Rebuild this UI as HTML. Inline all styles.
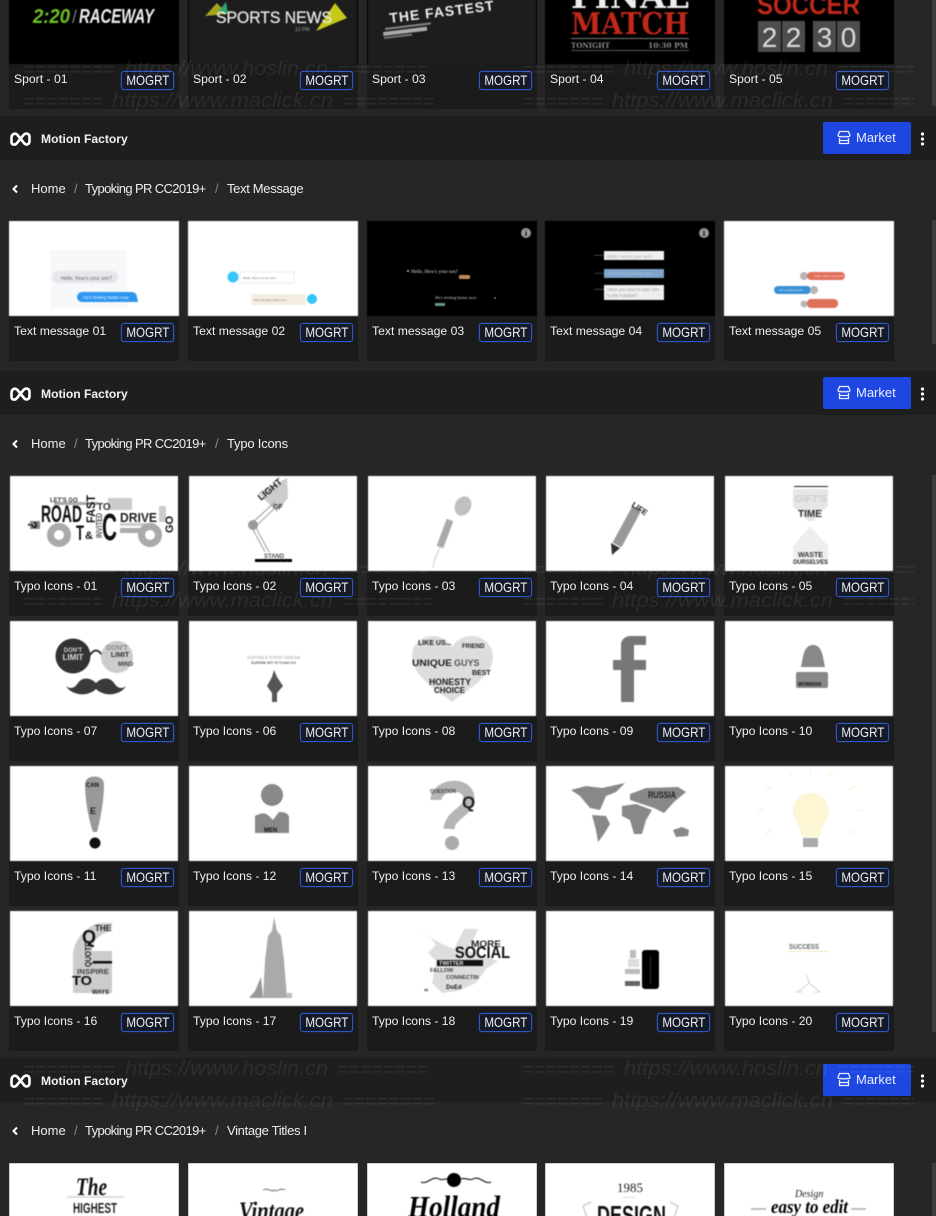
<!DOCTYPE html>
<html><head><meta charset="utf-8"><title>Motion Factory</title>
<style>
html,body{margin:0;padding:0;background:#262626;width:936px;height:1216px;overflow:hidden}
body{font-family:"Liberation Sans",sans-serif;color:#eee}
#p{position:relative;width:936px;height:1216px;overflow:hidden}
.c{position:absolute;width:170px;height:140px;background:#1b1b1b}
.v{height:53px;overflow:hidden}
.x1{left:9px}.x2{left:188px}.x3{left:367px}.x4{left:545px}.x5{left:724px}
.i{position:absolute;left:0;top:0;width:170px;height:95px;background:#fff;display:block;overflow:hidden;filter:blur(.4px)}
.y .i{left:1px;width:168px}
.k{background:#000}.g{background:#1d1d1d;box-shadow:inset 1px 0 #000,inset -1px 0 #000}
.t{position:absolute;left:5px;top:103px;font-size:12.2px;line-height:14px;color:#f0f0f0;white-space:nowrap}
.m{position:absolute;left:112px;top:102px;width:51px;height:17px;border:1px solid #2f57c4;border-radius:3px;background:#151a28;font-size:14px;line-height:16px;text-align:center;color:#eee;box-shadow:0 0 1px #2f57c4}
.m span{display:block;transform:scaleX(.83)}
.h{position:absolute;left:0;width:936px;height:44px;background:#1e1e1e}
.logo{position:absolute;left:9px;top:15px}
.n{position:absolute;left:41px;top:16px;font-size:12.1px;line-height:15px;font-weight:bold;color:#f2f2f2}
.b{position:absolute;left:823px;top:6px;width:88px;height:32px;background:#1d47e0;border-radius:2px;color:#e9eeff;font-size:13px;line-height:31px}
.b span{position:absolute;left:33px}
.b svg{position:absolute;left:14px;top:8px}
.d{position:absolute;left:920px;top:16px}
.r{position:absolute;left:0;width:600px;height:20px;font-size:13px;line-height:20px;color:#eee}
.r span{position:absolute;white-space:nowrap}
.r i{position:absolute;font-style:normal;color:#8a8a8a}
.r svg{position:absolute;left:11px;top:5px}
.tp{letter-spacing:-.63px}
.sb{position:absolute;left:932px;width:4px;background:#3c3c3c}
svg text{font-family:"Liberation Sans",sans-serif}
.bd{font-weight:bold}
svg .sf{font-family:"Liberation Serif",serif}
svg .dj{font-family:"DejaVu Serif",serif}
.wm{position:absolute;left:0;top:0;pointer-events:none}
</style></head><body><div id="p">

<div class="sb" style="top:0;height:106px"></div>
<div class="sb" style="top:220px;height:124px"></div>
<div class="sb" style="top:475px;height:557px"></div>
<div class="sb" style="top:1163px;height:53px"></div>

<!-- Sport row -->
<div class="c x1" style="top:-31px"><svg class="i k" viewBox="0 0 170 95"><text x="24" y="54" class="bd" font-style="italic" font-size="20" fill="#6fc21f" textLength="37" lengthAdjust="spacingAndGlyphs">2:20</text><text x="63" y="54" font-size="18" fill="#777">/</text><text x="70" y="54" class="bd" font-style="italic" font-size="20" fill="#eee" textLength="75" lengthAdjust="spacingAndGlyphs">RACEWAY</text></svg><div class="t">Sport - 01</div><div class="m"><span>MOGRT</span></div></div>

<div class="c x2" style="top:-31px"><svg class="i g" viewBox="0 0 170 95"><polygon points="17,47 29,34 39,45" fill="#a5a51c"/><polygon points="30,43 38,33 40,45" fill="#2aa86a"/><polygon points="128,62 147,34 159,49" fill="#c8c81a"/><text x="28" y="54" font-size="17" fill="#e8e8e8" stroke="#e8e8e8" stroke-width=".3" textLength="116" lengthAdjust="spacingAndGlyphs">SPORTS NEWS</text><text x="107" y="62" font-size="5" class="bd" fill="#777">12 PM</text></svg><div class="t">Sport - 02</div><div class="m"><span>MOGRT</span></div></div>

<div class="c x3" style="top:-31px"><svg class="i g" viewBox="0 0 170 95"><text x="23" y="54" class="bd" font-size="14" fill="#eee" letter-spacing="1" transform="rotate(-7 23 54)">THE FASTEST</text><rect x="18" y="59" width="46" height="2" fill="#888" transform="rotate(-7 18 59)"/><rect x="16" y="63" width="44" height="4" fill="#aaa" transform="rotate(-7 16 63)"/><rect x="17" y="68" width="28" height="2" fill="#777" transform="rotate(-7 17 68)"/></svg><div class="t">Sport - 03</div><div class="m"><span>MOGRT</span></div></div>

<div class="c x4" style="top:-31px"><svg class="i k" viewBox="0 0 170 95"><text x="26" y="39" class="bd dj" font-size="34" fill="#eee" textLength="118" lengthAdjust="spacingAndGlyphs">FINAL</text><text x="26" y="65" class="bd dj" font-size="30" fill="#c0281a" textLength="118" lengthAdjust="spacingAndGlyphs">MATCH</text><rect x="26" y="69" width="118" height="1" fill="#777"/><text x="26" y="79" class="bd dj" font-size="7" fill="#888" textLength="39" lengthAdjust="spacingAndGlyphs">TONIGHT</text><text x="103" y="79" class="bd dj" font-size="7" fill="#888" textLength="40" lengthAdjust="spacingAndGlyphs">10:30 PM</text><rect x="26" y="81" width="118" height="1" fill="#555"/></svg><div class="t">Sport - 04</div><div class="m"><span>MOGRT</span></div></div>

<div class="c x5" style="top:-31px"><svg class="i k" viewBox="0 0 170 95"><text x="33" y="45" class="bd" font-size="27" fill="#c0281a" textLength="103" lengthAdjust="spacingAndGlyphs">SOCCER</text><rect x="34" y="52" width="23" height="31" fill="#4d4d4d"/><rect x="58" y="52" width="23" height="31" fill="#4d4d4d"/><rect x="89" y="52" width="23" height="31" fill="#4d4d4d"/><rect x="113" y="52" width="23" height="31" fill="#4d4d4d"/><g font-size="28" fill="#ddd" text-anchor="middle"><text x="45.500" y="78">2</text><text x="69.500" y="78">2</text><text x="100.500" y="78">3</text><text x="124.500" y="78">0</text></g></svg><div class="t">Sport - 05</div><div class="m"><span>MOGRT</span></div></div>

<!-- Header 1 -->
<div class="h" style="top:116px">
<svg class="logo" width="24" height="16" viewBox="0 0 24 16"><path d="M2.500 11V7C2.500 3 6 1.500 8.500 4L15 12C17 14.500 20.500 13.500 20.500 10V6C20.500 2.500 17 1.500 14.500 4L8 12C6 14.500 2.500 14 2.500 11Z" fill="none" stroke="#fff" stroke-width="2.600" stroke-linejoin="round"/></svg>
<div class="n">Motion Factory</div>
<div class="b"><svg width="14" height="15" viewBox="0 0 14 15"><path d="M2.500 1.500h9l1.500 4a2 2 0 0 1-3 .8 2 2 0 0 1-3 0 2 2 0 0 1-3 0 2 2 0 0 1-3-.8zM2.500 8v5.500h9V8M3 10.500h8" fill="none" stroke="#e9eeff" stroke-width="1.300"/></svg><span>Market</span></div>
<svg class="d" width="5" height="14" viewBox="0 0 5 14" fill="#fff"><circle cx="2.500" cy="2" r="1.600"/><circle cx="2.500" cy="7" r="1.600"/><circle cx="2.500" cy="12" r="1.600"/></svg>
</div>
<div class="r" style="top:179px"><svg width="8" height="10" viewBox="0 0 8 10"><path d="M6 1.500L2.500 5 6 8.500" fill="none" stroke="#fff" stroke-width="2"/></svg><span style="left:31px">Home</span><i style="left:74px">/</i><span class="tp" style="left:85px">Typoking PR CC2019+</span><i style="left:215px">/</i><span style="left:227px;letter-spacing:-.33px">Text Message</span></div>

<!-- Text message row -->
<div class="c x1" style="top:221px"><svg class="i" viewBox="0 0 170 95"><rect x="41" y="29" width="77" height="58" fill="#f7f8fa"/><rect x="43" y="50" width="66" height="12" rx="6" fill="#e6e7ec"/><text x="52" y="59" font-size="5" fill="#666">Hello, How's your son?</text><path d="M68 76a5 5 0 0 1 5-5h50a5 5 0 0 1 5 5l1 5h-56a5 5 0 0 1-5-5z" fill="#2f97f0"/><text x="74" y="78" font-size="4.500" fill="#e8f4ff">He's feeling better now</text></svg><div class="t">Text message 01</div><div class="m"><span>MOGRT</span></div></div>

<div class="c x2" style="top:221px"><svg class="i" viewBox="0 0 170 95"><rect x="52" y="51" width="54" height="11" fill="#fff" stroke="#e4e4e4" stroke-width=".8"/><circle cx="45" cy="56" r="5.500" fill="#36c5f8"/><text x="55" y="58" font-size="3.500" class="sf" fill="#666">Hello, How's your son?</text><rect x="63" y="73" width="55" height="11" fill="#f3eee0"/><circle cx="124" cy="78" r="5" fill="#36c5f8"/><text x="66" y="80" font-size="3.500" class="sf" fill="#777">He's feeling better now</text></svg><div class="t">Text message 02</div><div class="m"><span>MOGRT</span></div></div>

<div class="c x3" style="top:221px"><svg class="i k" viewBox="0 0 170 95"><circle cx="41" cy="50" r="1" fill="#ccc"/><text x="44" y="52" font-size="5" class="sf" fill="#ddd">Hello, How's your son?</text><rect x="92" y="54" width="11" height="4" rx="1" fill="#c08a5a"/><text x="68" y="78" font-size="4.500" class="sf" fill="#ccc">He's feeling better now</text><rect x="68" y="82" width="10" height="3" fill="#6a9a80"/><circle cx="128" cy="77" r=".8" fill="#ccc"/><circle cx="159" cy="12" r="5" fill="#999"/><text x="159" y="15" font-size="8" class="bd sf" fill="#000" text-anchor="middle">i</text></svg><div class="t">Text message 03</div><div class="m"><span>MOGRT</span></div></div>

<div class="c x4" style="top:221px"><svg class="i k" viewBox="0 0 170 95"><rect x="49" y="34" width="10" height=".6" fill="#666"/><rect x="59" y="30" width="60" height="9" fill="#eee"/><text x="62" y="37" font-size="4.500" fill="#aaa">Hello, How's your son?</text><rect x="50" y="52" width="9" height=".6" fill="#666"/><rect x="59" y="48" width="60" height="9" fill="#7fa4c9"/><text x="62" y="54" font-size="4.500" fill="#a8c2dc">He's feeling better now</text><rect x="49" y="68" width="10" height=".6" fill="#666"/><rect x="59" y="64" width="60" height="15" fill="#eee"/><text x="62" y="70" font-size="4.500" fill="#999">Have you tried to take him</text><text x="62" y="76" font-size="4.500" fill="#999">to the hospital?</text><circle cx="159" cy="12" r="5" fill="#999"/><text x="159" y="15" font-size="8" class="bd sf" fill="#000" text-anchor="middle">i</text></svg><div class="t">Text message 04</div><div class="m"><span>MOGRT</span></div></div>

<div class="c x5" style="top:221px"><svg class="i" viewBox="0 0 170 95"><circle cx="80" cy="55" r="4" fill="#b5b5b5"/><rect x="83" y="51" width="38" height="8" rx="4" fill="#e0705a"/><text x="90" y="56" font-size="3" fill="#fde">Hello, How's your son?</text><rect x="50" y="65" width="37" height="8" rx="4" fill="#3a90d5"/><text x="55" y="70" font-size="3" fill="#def">He's feeling better</text><circle cx="90" cy="69" r="4" fill="#b5b5b5"/><circle cx="80" cy="83" r="3.500" fill="#b5b5b5"/><rect x="83" y="78" width="31" height="9" rx="4" fill="#e0705a"/></svg><div class="t">Text message 05</div><div class="m"><span>MOGRT</span></div></div>

<!-- Header 2 -->
<div class="h" style="top:371px">
<svg class="logo" width="24" height="16" viewBox="0 0 24 16"><path d="M2.500 11V7C2.500 3 6 1.500 8.500 4L15 12C17 14.500 20.500 13.500 20.500 10V6C20.500 2.500 17 1.500 14.500 4L8 12C6 14.500 2.500 14 2.500 11Z" fill="none" stroke="#fff" stroke-width="2.600" stroke-linejoin="round"/></svg>
<div class="n">Motion Factory</div>
<div class="b"><svg width="14" height="15" viewBox="0 0 14 15"><path d="M2.500 1.500h9l1.500 4a2 2 0 0 1-3 .8 2 2 0 0 1-3 0 2 2 0 0 1-3 0 2 2 0 0 1-3-.8zM2.500 8v5.500h9V8M3 10.500h8" fill="none" stroke="#e9eeff" stroke-width="1.300"/></svg><span>Market</span></div>
<svg class="d" width="5" height="14" viewBox="0 0 5 14" fill="#fff"><circle cx="2.500" cy="2" r="1.600"/><circle cx="2.500" cy="7" r="1.600"/><circle cx="2.500" cy="12" r="1.600"/></svg>
</div>
<div class="r" style="top:434px"><svg width="8" height="10" viewBox="0 0 8 10"><path d="M6 1.500L2.500 5 6 8.500" fill="none" stroke="#fff" stroke-width="2"/></svg><span style="left:31px">Home</span><i style="left:74px">/</i><span class="tp" style="left:85px">Typoking PR CC2019+</span><i style="left:215px">/</i><span style="left:227px;letter-spacing:-.2px">Typo Icons</span></div>

<!-- Typo row 1 -->
<div class="c y x1" style="top:476px"><svg class="i" viewBox="0 0 168 95"><rect x="44" y="26" width="44" height="3" fill="#aaa"/><rect x="98" y="22" width="24" height="12" fill="#ccc"/><rect x="110" y="47" width="30" height="3" fill="#ccc"/><rect x="110" y="52" width="24" height="5" fill="#aaa"/><rect x="20" y="45" width="10" height="8" fill="#888"/><rect x="149" y="30" width="7" height="16" fill="#ccc"/><g fill="none" stroke="#aaa"><circle cx="49" cy="59" r="8.500" stroke-width="7"/><circle cx="140" cy="59" r="8.500" stroke-width="7"/></g><g class="bd" fill="#111"><text x="31" y="46" font-size="24" textLength="41" lengthAdjust="spacingAndGlyphs">ROAD</text><text x="40" y="26" font-size="6" fill="#333">LET'S GO</text><text x="87" y="34" font-size="10" fill="#333">TO</text><text x="110" y="46" font-size="13" fill="#222" textLength="37" lengthAdjust="spacingAndGlyphs">DRIVE</text><text x="92" y="64" font-size="38" textLength="15" lengthAdjust="spacingAndGlyphs">C</text><text x="66" y="64" font-size="21" textLength="8" lengthAdjust="spacingAndGlyphs">T</text><text x="75" y="63" font-size="11">&amp;</text><text x="85" y="47" font-size="12" transform="rotate(-90 85 47)" textLength="28" lengthAdjust="spacingAndGlyphs">FAST</text><text x="163" y="57" font-size="11" transform="rotate(-90 163 57)">GO</text><text x="18" y="45" font-size="13" transform="rotate(90 18 45)">?</text><text x="92" y="62" font-size="8" fill="#555" transform="rotate(-90 92 62)" textLength="25" lengthAdjust="spacingAndGlyphs">INVITED</text></g></svg><div class="t">Typo Icons - 01</div><div class="m"><span>MOGRT</span></div></div>

<div class="c y x2" style="top:476px"><svg class="i" viewBox="0 0 168 95"><polygon points="69,17 98,2 99,22 88,36" fill="#ccc"/><text x="72" y="25" class="bd" font-size="9.500" fill="#222" transform="rotate(-40 72 25)">LIGHT</text><text x="84" y="33" class="bd" font-size="7" fill="#333">OF</text><g stroke="#aaa" stroke-width="1.200" fill="none"><path d="M86 26L62 48M90 28L66 51M62 50L76 76M66 50L80 76"/></g><circle cx="64" cy="49" r="5" fill="#999"/><text x="75" y="82" class="bd" font-size="6" fill="#555">STAND</text><rect x="66" y="83" width="37" height="3" fill="#000"/></svg><div class="t">Typo Icons - 02</div><div class="m"><span>MOGRT</span></div></div>

<div class="c y x3" style="top:476px"><svg class="i" viewBox="0 0 168 95"><ellipse cx="95" cy="30" rx="8" ry="10" fill="#c0c0c0" transform="rotate(25 95 30)"/><path d="M82 44L72 71" stroke="#aaa" stroke-width="7"/><path d="M72 71C69 78 66 84 65 92" stroke="#ccc" fill="none"/></svg><div class="t">Typo Icons - 03</div><div class="m"><span>MOGRT</span></div></div>

<div class="c y x4" style="top:476px"><svg class="i" viewBox="0 0 168 95"><path d="M91 32L71 69" stroke="#999" stroke-width="10"/><text x="85" y="30" class="bd" font-size="8" fill="#222" transform="rotate(35 85 30)">LIFE</text><polygon points="65,67 74,72 66,79" fill="#333"/></svg><div class="t">Typo Icons - 04</div><div class="m"><span>MOGRT</span></div></div>

<div class="c y x5" style="top:476px"><svg class="i" viewBox="0 0 168 95"><rect x="69" y="10" width="34" height="1" fill="#222"/><polygon points="68,13 103,13 103,30 88,45 83,45 68,30" fill="#e6e6e6"/><text x="70" y="26" class="bd" font-size="10" fill="#ccc">GIFT'S</text><text x="73" y="41" class="bd" font-size="10" fill="#333">TIME</text><polygon points="85,50 103,70 103,88 68,88 68,70" fill="#eee"/><text x="73" y="81" class="bd" font-size="7" fill="#333">WASTE</text><text x="68" y="88" class="bd" font-size="6.500" fill="#333" textLength="35" lengthAdjust="spacingAndGlyphs">OURSELVES</text></svg><div class="t">Typo Icons - 05</div><div class="m"><span>MOGRT</span></div></div>

<!-- Typo row 2 -->
<div class="c y x1" style="top:621px"><svg class="i" viewBox="0 0 168 95"><circle cx="63" cy="35" r="17.500" fill="#333"/><text x="63" y="31" font-size="6" class="bd" fill="#ccc" text-anchor="middle">DON'T</text><text x="63" y="39" font-size="8" class="bd" fill="#ddd" text-anchor="middle">LIMIT</text><path d="M80 34C84 28 88 28 92 34" stroke="#333" stroke-width="2" fill="none"/><circle cx="107" cy="36" r="16" fill="#ccc"/><text x="107" y="29" font-size="7" class="bd" fill="#888" text-anchor="middle">DON'T</text><text x="110" y="36" font-size="7" class="bd" fill="#333" text-anchor="middle">LIMIT</text><text x="108" y="45" font-size="6" class="bd" fill="#444">MIND</text><path d="M86 62C80 56 72 56 68 62C64 68 60 68 56 65C62 75 78 76 86 68C94 76 110 75 116 65C112 68 108 68 104 62C100 56 92 56 86 62Z" fill="#3a3a3a"/></svg><div class="t">Typo Icons - 07</div><div class="m"><span>MOGRT</span></div></div>

<div class="c y x2" style="top:621px"><svg class="i" viewBox="0 0 168 95"><text x="58" y="38" font-size="4.500" class="bd" fill="#bbb" textLength="53" lengthAdjust="spacingAndGlyphs">SUITABLE EVENT DREAM</text><text x="62" y="43" font-size="3.500" class="bd" fill="#666" textLength="45" lengthAdjust="spacingAndGlyphs">SUPERB WIT STYLISH GO</text><polygon points="85,49 88,56 94,65 88,72 88,81 83,81 83,72 78,65 83,56" fill="#555"/></svg><div class="t">Typo Icons - 06</div><div class="m"><span>MOGRT</span></div></div>

<div class="c y x3" style="top:621px"><svg class="i" viewBox="0 0 168 95"><path d="M84 81C70 70 44 55 44 35C44 22 55 15 65 15C74 15 80 20 84 26C88 20 94 15 104 15C115 15 125 24 125 36C125 55 98 70 84 81Z" fill="#ddd"/><g class="bd" fill="#222"><text x="50" y="24" font-size="7">LIKE US...</text><text x="94" y="27" font-size="6">FRIEND</text><text x="44" y="45" font-size="9" textLength="40" lengthAdjust="spacingAndGlyphs">UNIQUE</text><text x="86" y="45" font-size="9" fill="#555">GUYS</text><text x="104" y="54" font-size="7">BEST</text><text x="61" y="64" font-size="9" textLength="42" lengthAdjust="spacingAndGlyphs">HONESTY</text><text x="66" y="72" font-size="8">CHOICE</text></g></svg><div class="t">Typo Icons - 08</div><div class="m"><span>MOGRT</span></div></div>

<div class="c y x4" style="top:621px"><svg class="i" viewBox="0 0 168 95"><path d="M75 81V49H67V39H75V24C75 18 80 15 85 15H100V24H88V39H100V49H88V81Z" fill="#777"/></svg><div class="t">Typo Icons - 09</div><div class="m"><span>MOGRT</span></div></div>

<div class="c y x5" style="top:621px"><svg class="i" viewBox="0 0 168 95"><path d="M76 46C78 38 78 24 88 24C98 24 98 38 100 46Z" fill="#888"/><rect x="71" y="51" width="32" height="16" rx="2" fill="#888"/><text x="73" y="65" font-size="5" class="bd" fill="#111">WOMANS</text></svg><div class="t">Typo Icons - 10</div><div class="m"><span>MOGRT</span></div></div>

<!-- Typo row 3 -->
<div class="c y x1" style="top:766px"><svg class="i" viewBox="0 0 168 95"><path d="M75 18C75 8 94 8 94 18C94 35 90 55 87 66H83C79 55 75 35 75 18Z" fill="#999"/><text x="76" y="21" font-size="6" class="bd" fill="#111">CAN</text><text x="80" y="48" font-size="9" class="bd" fill="#222">E</text><circle cx="85" cy="77" r="5.500" fill="#111"/></svg><div class="t">Typo Icons - 11</div><div class="m"><span>MOGRT</span></div></div>

<div class="c y x2" style="top:766px"><svg class="i" viewBox="0 0 168 95"><circle cx="83" cy="29" r="11" fill="#888"/><path d="M66 67V50C72 47 76 46 80 50L84 54L90 46C95 46 100 47 100 52V67Z" fill="#888"/><text x="75" y="66" font-size="6" class="bd" fill="#111">MEN</text></svg><div class="t">Typo Icons - 12</div><div class="m"><span>MOGRT</span></div></div>

<div class="c y x3" style="top:766px"><svg class="i" viewBox="0 0 168 95"><path d="M68 34C68 18 101 14 101 33C101 46 82 48 81 63" stroke="#b5b5b5" stroke-width="11" fill="none"/><text x="62" y="27" font-size="5" class="bd" fill="#444">QUESTION</text><text x="94" y="42" font-size="17" class="bd" fill="#222">Q</text><circle cx="84" cy="77" r="7" fill="#aaa"/></svg><div class="t">Typo Icons - 13</div><div class="m"><span>MOGRT</span></div></div>

<div class="c y x4" style="top:766px"><svg class="i" viewBox="0 0 168 95"><g fill="#888"><polygon points="25,24 40,20 56,22 79,17 70,26 60,30 54,44 44,42 34,30"/><polygon points="46,49 60,50 64,58 58,68 52,76 50,64"/><polygon points="76,40 90,38 106,44 100,54 96,68 88,68 84,54 76,50"/><polygon points="84,28 100,22 132,21 140,26 128,36 118,47 108,42 96,38 84,34"/><polygon points="127,64 136,61 143,64 142,70 130,71"/></g><text x="102" y="32" font-size="9" class="bd" fill="#222" textLength="28" lengthAdjust="spacingAndGlyphs">RUSSIA</text></svg><div class="t">Typo Icons - 14</div><div class="m"><span>MOGRT</span></div></div>

<div class="c y x5" style="top:766px"><svg class="i" viewBox="0 0 168 95"><path d="M86 27C75 27 68 36 68 45C68 54 76 60 77 71H95C96 60 104 54 104 45C104 36 97 27 86 27Z" fill="#fcf6d5"/><rect x="78" y="72" width="15" height="9" fill="#aaa"/><g stroke="#faf6e2" stroke-width="2"><path d="M64 4L66 10M85 3V9M107 4L104 10M41 20L47 24M130 20L124 24M33 44H39M131 44H137M41 68L47 64M130 68L124 64"/></g></svg><div class="t">Typo Icons - 15</div><div class="m"><span>MOGRT</span></div></div>

<!-- Typo row 4 -->
<div class="c y x1" style="top:911px"><svg class="i" viewBox="0 0 168 95"><path d="M63 82V45C63 30 75 15 90 12H102V20C90 22 82 30 82 40H102V82Z" fill="#ccc"/><g class="bd" fill="#222"><text x="85" y="20" font-size="8">THE</text><text x="72" y="32" font-size="18" fill="#111">Q</text><text x="81" y="56" font-size="8" fill="#222" transform="rotate(-90 81 56)" textLength="25" lengthAdjust="spacingAndGlyphs">QUOTE</text><rect x="83" y="50" width="19" height="2.500" fill="#111"/><text x="67" y="63" font-size="7" fill="#444" textLength="32" lengthAdjust="spacingAndGlyphs">INSPIRE</text><text x="62" y="74" font-size="13" fill="#111" textLength="20" lengthAdjust="spacingAndGlyphs">TO</text><text x="82" y="83" font-size="6">WAYS</text></g></svg><div class="t">Typo Icons - 16</div><div class="m"><span>MOGRT</span></div></div>

<div class="c y x2" style="top:911px"><svg class="i" viewBox="0 0 168 95"><polygon points="85,6 88,20 92,25 95,50 98,87 74,87 76,50 79,25 83,20" fill="#aaa"/><polygon points="60,87 66,80 72,66 74,87" fill="#999"/><rect x="98" y="82" width="5" height="5" fill="#bbb"/></svg><div class="t">Typo Icons - 17</div><div class="m"><span>MOGRT</span></div></div>

<div class="c y x3" style="top:911px"><svg class="i" viewBox="0 0 168 95"><polygon points="52,21 62,26 68,34 60,42 68,50 64,72 74,82 90,80 108,72 118,58 130,50 100,40 110,18 96,18 86,38 76,34" fill="#ddd"/><g class="bd" fill="#222"><text x="103" y="36" font-size="9" textLength="30" lengthAdjust="spacingAndGlyphs">MORE</text><text x="87" y="47" font-size="17" fill="#111" textLength="55" lengthAdjust="spacingAndGlyphs">SOCIAL</text><rect x="69" y="49" width="46" height="6" fill="#111"/><text x="71" y="54" font-size="5.500" fill="#eee">TWITTER</text><text x="62" y="61" font-size="5.500" fill="#444">FALLOW</text><text x="78" y="68" font-size="5.500" fill="#444">CONNECTIN</text><text x="78" y="78" font-size="6">DoEd</text><text x="56" y="84" font-size="9">“</text></g></svg><div class="t">Typo Icons - 18</div><div class="m"><span>MOGRT</span></div></div>

<div class="c y x4" style="top:911px"><svg class="i" viewBox="0 0 168 95"><rect x="96" y="39" width="17" height="39" rx="3" fill="#000"/><rect x="104" y="45" width="1" height="28" fill="#333"/><g fill="#bbb"><rect x="84" y="39" width="6" height="8"/><rect x="82" y="48" width="11" height="8" fill="#ddd"/><rect x="79" y="58" width="15" height="5"/><rect x="79" y="70" width="15" height="5" fill="#666"/></g></svg><div class="t">Typo Icons - 19</div><div class="m"><span>MOGRT</span></div></div>

<div class="c y x5" style="top:911px"><svg class="i" viewBox="0 0 168 95"><text x="64" y="38" font-size="7" class="bd" fill="#666" textLength="30" lengthAdjust="spacingAndGlyphs">SUCCESS</text><rect x="64" y="40" width="39" height="1" fill="#f5e6b8"/><g stroke="#bbb" stroke-width=".6" fill="none"><path d="M82 64L84 72L73 81M84 72L95 81M69 81H78M88 81H96"/></g></svg><div class="t">Typo Icons - 20</div><div class="m"><span>MOGRT</span></div></div>

<!-- Header 3 -->
<div class="h" style="top:1058px">
<svg class="logo" width="24" height="16" viewBox="0 0 24 16"><path d="M2.500 11V7C2.500 3 6 1.500 8.500 4L15 12C17 14.500 20.500 13.500 20.500 10V6C20.500 2.500 17 1.500 14.500 4L8 12C6 14.500 2.500 14 2.500 11Z" fill="none" stroke="#fff" stroke-width="2.600" stroke-linejoin="round"/></svg>
<div class="n">Motion Factory</div>
<div class="b"><svg width="14" height="15" viewBox="0 0 14 15"><path d="M2.500 1.500h9l1.500 4a2 2 0 0 1-3 .8 2 2 0 0 1-3 0 2 2 0 0 1-3 0 2 2 0 0 1-3-.8zM2.500 8v5.500h9V8M3 10.500h8" fill="none" stroke="#e9eeff" stroke-width="1.300"/></svg><span>Market</span></div>
<svg class="d" width="5" height="14" viewBox="0 0 5 14" fill="#fff"><circle cx="2.500" cy="2" r="1.600"/><circle cx="2.500" cy="7" r="1.600"/><circle cx="2.500" cy="12" r="1.600"/></svg>
</div>
<div class="r" style="top:1121px"><svg width="8" height="10" viewBox="0 0 8 10"><path d="M6 1.500L2.500 5 6 8.500" fill="none" stroke="#fff" stroke-width="2"/></svg><span style="left:31px">Home</span><i style="left:74px">/</i><span class="tp" style="left:85px">Typoking PR CC2019+</span><i style="left:215px">/</i><span style="left:227px;letter-spacing:-.33px">Vintage Titles I</span></div>

<!-- Vintage row -->
<div class="c v x1" style="top:1163px"><svg class="i" viewBox="0 0 170 95"><text x="67" y="32" class="bd sf" font-style="italic" font-size="25" fill="#111" textLength="31" lengthAdjust="spacingAndGlyphs">The</text><rect x="58" y="33" width="57" height="2" fill="#ddd"/><text x="64" y="50" class="bd" font-size="15" fill="#222" textLength="44" lengthAdjust="spacingAndGlyphs">HIGHEST</text><text x="64" y="67" class="bd" font-size="15" fill="#222" textLength="44" lengthAdjust="spacingAndGlyphs">QUALITY</text></svg></div>

<div class="c v x2" style="top:1163px"><svg class="i" viewBox="0 0 170 95"><path d="M75 27C80 24 84 30 86 27C88 30 92 24 97 27" stroke="#777" fill="none"/><text x="51" y="56" class="bd sf" font-style="italic" font-size="25" fill="#111" textLength="65" lengthAdjust="spacingAndGlyphs">Vintage</text></svg></div>

<div class="c v x3" style="top:1163px"><svg class="i" viewBox="0 0 170 95"><circle cx="87" cy="17" r="7" fill="#000"/><path d="M54 19C60 22 66 12 72 16C76 18 78 15 80 16M94 16C98 14 102 18 106 16C112 12 118 22 124 19" stroke="#222" stroke-width="1.200" fill="none"/><text x="41" y="54" class="bd sf" font-style="italic" font-size="31" fill="#000" textLength="92" lengthAdjust="spacingAndGlyphs">Holland</text></svg></div>

<div class="c v x4" style="top:1163px"><svg class="i" viewBox="0 0 170 95"><text x="85" y="29" class="sf" font-size="13" fill="#222" text-anchor="middle">1985</text><rect x="78" y="34" width="12" height=".7" fill="#ccc"/><text x="52" y="61" class="bd" font-size="26" fill="#111" textLength="69" lengthAdjust="spacingAndGlyphs">DESIGN</text><path d="M46 39L38 43L42 55M125 39L133 43L129 55" stroke="#bbb" fill="none"/></svg></div>

<div class="c v x5" style="top:1163px"><svg class="i" viewBox="0 0 170 95"><text x="71" y="34" class="sf" font-style="italic" font-size="10" fill="#222">Design</text><text x="47" y="50" class="bd sf" font-style="italic" font-size="19" fill="#000" textLength="77" lengthAdjust="spacingAndGlyphs">easy to edit</text><path d="M27 46H42M127 46H142" stroke="#aaa" stroke-width="1.500"/></svg></div>

<!-- Watermark overlay -->
<svg class="wm" width="914" height="1216" viewBox="0 0 914 1216">
<g fill="rgba(255,255,255,.07)" font-size="20" font-style="italic">
<text x="23" y="76" textLength="92" lengthAdjust="spacingAndGlyphs">========</text><text x="125" y="75" textLength="203" lengthAdjust="spacingAndGlyphs">https://www.hoslin.cn</text><text x="337" y="76" textLength="91" lengthAdjust="spacingAndGlyphs">========</text>
<text x="23" y="108" textLength="80" lengthAdjust="spacingAndGlyphs">=======</text><text x="112" y="107" textLength="221" lengthAdjust="spacingAndGlyphs">https://www.maclick.cn</text><text x="342" y="108" textLength="92" lengthAdjust="spacingAndGlyphs">========</text>
<text x="522" y="76" textLength="92" lengthAdjust="spacingAndGlyphs">========</text><text x="624" y="75" textLength="204" lengthAdjust="spacingAndGlyphs">https://www.hoslin.cn</text><text x="837" y="76" textLength="92" lengthAdjust="spacingAndGlyphs">========</text>
<text x="522" y="108" textLength="81" lengthAdjust="spacingAndGlyphs">=======</text><text x="612" y="107" textLength="221" lengthAdjust="spacingAndGlyphs">https://www.maclick.cn</text><text x="842" y="108" textLength="92" lengthAdjust="spacingAndGlyphs">========</text>
<text x="23" y="576" textLength="92" lengthAdjust="spacingAndGlyphs">========</text><text x="125" y="575" textLength="203" lengthAdjust="spacingAndGlyphs">https://www.hoslin.cn</text><text x="337" y="576" textLength="91" lengthAdjust="spacingAndGlyphs">========</text>
<text x="23" y="608" textLength="80" lengthAdjust="spacingAndGlyphs">=======</text><text x="112" y="607" textLength="221" lengthAdjust="spacingAndGlyphs">https://www.maclick.cn</text><text x="342" y="608" textLength="92" lengthAdjust="spacingAndGlyphs">========</text>
<text x="522" y="576" textLength="92" lengthAdjust="spacingAndGlyphs">========</text><text x="624" y="575" textLength="204" lengthAdjust="spacingAndGlyphs">https://www.hoslin.cn</text><text x="837" y="576" textLength="92" lengthAdjust="spacingAndGlyphs">========</text>
<text x="522" y="608" textLength="81" lengthAdjust="spacingAndGlyphs">=======</text><text x="612" y="607" textLength="221" lengthAdjust="spacingAndGlyphs">https://www.maclick.cn</text><text x="842" y="608" textLength="92" lengthAdjust="spacingAndGlyphs">========</text>
<text x="23" y="1076" textLength="92" lengthAdjust="spacingAndGlyphs">========</text><text x="125" y="1075" textLength="203" lengthAdjust="spacingAndGlyphs">https://www.hoslin.cn</text><text x="337" y="1076" textLength="91" lengthAdjust="spacingAndGlyphs">========</text>
<text x="23" y="1108" textLength="80" lengthAdjust="spacingAndGlyphs">=======</text><text x="112" y="1107" textLength="221" lengthAdjust="spacingAndGlyphs">https://www.maclick.cn</text><text x="342" y="1108" textLength="92" lengthAdjust="spacingAndGlyphs">========</text>
<text x="522" y="1076" textLength="92" lengthAdjust="spacingAndGlyphs">========</text><text x="624" y="1075" textLength="204" lengthAdjust="spacingAndGlyphs">https://www.hoslin.cn</text><text x="837" y="1076" textLength="92" lengthAdjust="spacingAndGlyphs">========</text>
<text x="522" y="1108" textLength="81" lengthAdjust="spacingAndGlyphs">=======</text><text x="612" y="1107" textLength="221" lengthAdjust="spacingAndGlyphs">https://www.maclick.cn</text><text x="842" y="1108" textLength="92" lengthAdjust="spacingAndGlyphs">========</text>
</g></svg>
</div></body></html>
